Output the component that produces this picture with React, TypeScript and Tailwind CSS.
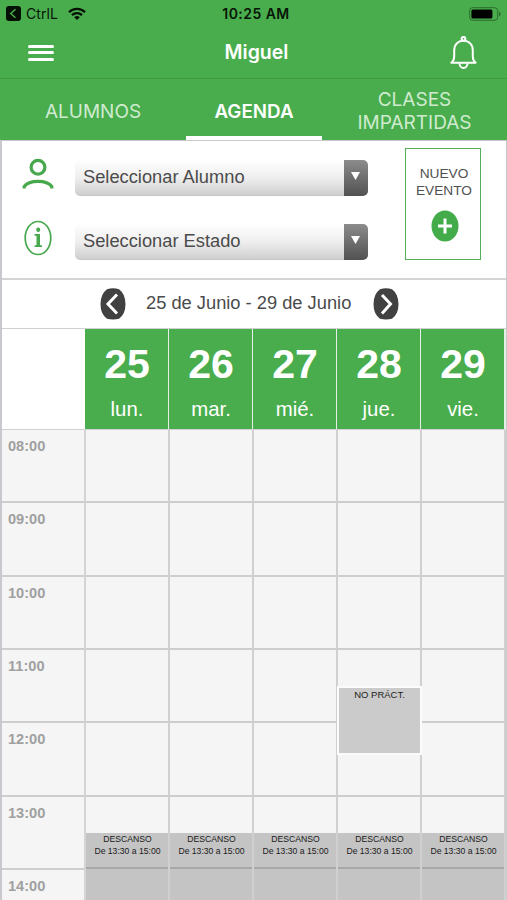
const days = [
  { n: "25", d: "lun." },
  { n: "26", d: "mar." },
  { n: "27", d: "mié." },
  { n: "28", d: "jue." },
  { n: "29", d: "vie." },
];
const hours = ["08:00", "09:00", "10:00", "11:00", "12:00", "13:00", "14:00"];

function StatusBar() {
  return (
    <div className="flex h-[27px] items-center text-[14px] leading-none text-[#071507]">
      <div className="flex flex-1 items-center pl-[6px]">
        <svg width="15" height="15" viewBox="0 0 15 15">
          <rect width="15" height="15" rx="3" fill="#041004" />
          <path d="M9.5 3.3 4.8 7.5l4.7 4.2" fill="none" stroke="#49ad4d" strokeWidth="1.5" />
        </svg>
        <span className="ml-[5px] pt-px text-[14px] tracking-[0.1px]">CtrlL</span>
        <svg className="ml-[10px]" width="18" height="14" viewBox="0 0 18 14" fill="none" stroke="#041004" strokeWidth="2.3">
          <path d="M1 5.2a11.4 11.4 0 0 1 16 0" />
          <path d="M4 8.2a7.2 7.2 0 0 1 10 0" />
          <path d="M9 13 6.2 10.3a4 4 0 0 1 5.6 0z" fill="#041004" stroke="none" />
        </svg>
      </div>
      <span className="ml-[5px] text-[14px] font-semibold tracking-[0.45px]">10:25 AM</span>
      <div className="flex flex-1 justify-end pr-[6px]">
        <svg width="32" height="14" viewBox="0 0 32 14">
          <rect x="0.7" y="0.7" width="28" height="12.6" rx="3" fill="none" stroke="#2c6b2f" />
          <rect x="2.4" y="2.4" width="21" height="9.2" rx="1.6" fill="#000" />
          <path d="M30 4.7q1.7.6 1.7 2.3T30 9.3z" fill="#2c6b2f" />
        </svg>
      </div>
    </div>
  );
}

function SelectBox({ label }: { label: string }) {
  return (
    <div className="flex h-[36px] w-[293px] overflow-hidden rounded-[5px]">
      <div className="flex flex-1 items-center border-b border-[#c6c6c6] bg-linear-to-b from-[#fefefe] via-[#efefef] to-[#cfcfcf] pl-2 text-[18.3px] leading-none text-[#4b4b4b]">
        {label}
      </div>
      <div className="flex w-[24px] justify-center bg-linear-to-b from-[#8c8c8c] to-[#525252] pt-[12px]">
        <svg className="mr-[2px]" width="9" height="8" viewBox="0 0 9 8">
          <path d="M0 0h9L4.5 8z" fill="#fff" />
        </svg>
      </div>
    </div>
  );
}

function Arrow({ next }: { next?: boolean }) {
  return (
    <svg width="26" height="32" viewBox="0 0 26 32">
      <path d="M7 1.2Q13-.8 19 1.2 25.5 6 25.5 16T19 30.8Q13 32.4 7 30.8.5 26 .5 16T7 1.2z" fill="#414141" />
      <path
        d={next ? "M9 7 17.5 16 9 25.500" : "M17 6.500 8 16l9 9.500"}
        fill="none"
        stroke="#fff"
        strokeWidth="3"
      />
    </svg>
  );
}

export default function App() {
  return (
    <div className="flex h-[900px] w-[507px] flex-col overflow-hidden bg-white font-['Liberation_Sans',Arial,sans-serif]">
      <header className="bg-[#49ad4d] font-[Inter,sans-serif]">
        <StatusBar />
        <div className="flex h-[52px] items-center border-b border-[#419b45] pl-[28px] pr-[29px]">
          <div className="flex flex-1">
            <div className="flex w-[26px] flex-col gap-[3.5px]">
              <div className="h-[3px] rounded-full bg-white" />
              <div className="h-[3px] rounded-full bg-white" />
              <div className="h-[3px] rounded-full bg-white" />
            </div>
          </div>
          <h1 className="ml-[7px] pt-px text-[19.5px] font-semibold leading-none text-white">Miguel</h1>
          <div className="flex flex-1 justify-end">
            <svg width="28" height="34" viewBox="0 0 28 34" fill="none" stroke="#fff" strokeWidth="2">
              <circle cx="13.500" cy="2.800" r="1.900" />
              <path d="M1.300 26.700Q4.200 24.500 4.200 20.500V14.500C4.200 8.500 8 4.800 13.500 4.800s9.300 3.700 9.300 9.700v6q0 4 2.900 6.200z" strokeLinejoin="round" />
              <path d="M9.500 27.200a4 4.800 0 0 0 8 0" />
            </svg>
          </div>
        </div>
        <nav className="flex h-[61px] text-center text-[19px] leading-[23px] text-[#d0ebd0]">
          <div className="flex w-[186px] items-center justify-center pt-[3px]">ALUMNOS</div>
          <div className="flex w-[136px] items-center justify-center border-b-4 border-white pt-[7px] text-[18.800px] font-semibold text-white">AGENDA</div>
          <div className="flex w-[185px] items-center justify-center pt-[2px]">
            <span>CLASES<br />IMPARTIDAS</span>
          </div>
        </nav>
      </header>

      <main className="flex flex-1 flex-col border-l-2 border-t border-r border-[#c9c9cd]">
        <section className="flex h-[139px] border-b-2 border-[#d4d4d4]">
          <div className="mr-px flex w-[72px] flex-col items-center pt-[16px]">
            <svg width="32" height="33" viewBox="0 0 32 33" fill="none" stroke="#47a84d" strokeWidth="3.200">
              <circle cx="16" cy="10.300" r="6.900" />
              <path d="M2.200 31.500V29.500C4.500 26.300 9.500 24.300 16 24.300s11.500 2 13.800 5.200v2" />
            </svg>
            <svg className="mt-[30px]" width="28" height="36" viewBox="0 0 28 36">
              <ellipse cx="14" cy="18" rx="12.800" ry="16.500" fill="none" stroke="#47a84d" strokeWidth="1.700" />
              <ellipse cx="14.200" cy="9.800" rx="2" ry="2.200" fill="#47a84d" />
              <path d="M10.500 14H16v11l2 .4V27h-7.500v-1.600l2-.4v-9l-2-.4z" fill="#47a84d" />
            </svg>
          </div>
          <div className="flex flex-col gap-[28px] pt-[19px]">
            <SelectBox label="Seleccionar Alumno" />
            <SelectBox label="Seleccionar Estado" />
          </div>
          <button className="ml-[37px] mt-[7px] flex h-[112px] w-[76px] flex-col items-center border-[1.500px] border-[#52b058] pt-[16px] text-[13.700px] leading-[17px] text-[#505050]">
            <span className="ml-[2px]">NUEVO</span>
            <span className="ml-[2px]">EVENTO</span>
            <svg className="ml-[3px] mt-[11px]" width="28" height="32" viewBox="0 0 28 32">
              <ellipse cx="14" cy="16" rx="13.500" ry="15.500" fill="#43ab4a" />
              <path d="M7 16h14M14 8.500v15" stroke="#fff" strokeWidth="3" />
            </svg>
          </button>
        </section>

        <section className="flex h-[49px] items-center border-b border-[#d0d0d0] pl-[98px]">
          <Arrow />
          <span className="ml-[20px] w-[206px] whitespace-nowrap pb-[2px] text-[18.300px] leading-none text-[#4b4b4b]">
            25 de Junio - 29 de Junio
          </span>
          <div className="ml-[21px]"><Arrow next /></div>
        </section>

        <section className="flex h-[571px] overflow-hidden">
          <div className="w-[84px] border-r-2 border-[#d4d4d4]">
            <div className="-mr-[2px] h-[101px] border-b border-[#d0d0d0] bg-white" />
            {hours.map((h) => (
              <div key={h} className="h-[73.330px] border-b-2 border-[#cecece] bg-[#f5f5f5] pl-[6px] pt-[8px] text-[14.600px] font-bold leading-[17px] text-[#a0a0a0]">
                {h}
              </div>
            ))}
          </div>
          {days.map((day) => (
            <div key={day.n} className="relative w-[84px] border-r-2 border-[#d0d0d0]">
              <div className="-ml-px -mr-[2px] h-[101px] border-b border-r-2 border-b-[#d0d0d0] border-r-[#e6efe6] bg-[#49ad4d] text-white">
                <div className="ml-px flex flex-col items-center">
                  <span className="mt-[12px] text-[41px] font-bold leading-[46px]">{day.n}</span>
                  <span className="mt-[10px] text-[20.400px] leading-[24px]">{day.d}</span>
                </div>
              </div>
              {hours.map((h) => (
                <div key={h} className="h-[73.330px] border-b-2 border-[#cecece] bg-[#f5f5f5]" />
              ))}
              {day.n === "28" && (
                <div className="absolute -left-px -right-[2px] top-[357px] z-10 h-[69px] border-2 border-[#fbfbfb] bg-[#cbcbcb] pt-px text-center text-[9.500px] leading-[11px] text-[#1d1d1d]">
                  NO PRÁCT.
                </div>
              )}
              <div className="absolute inset-x-0 bottom-0 top-[504px] bg-[#c4c4c4] text-center text-[8.650px] leading-[12px] text-[#202020]">
                <div className="h-[36px] border-b-2 border-[#a9a9a9] pl-px">
                  DESCANSO
                  <br />
                  De 13:30 a 15:00
                </div>
              </div>
            </div>
          ))}
        </section>
      </main>
    </div>
  );
}
